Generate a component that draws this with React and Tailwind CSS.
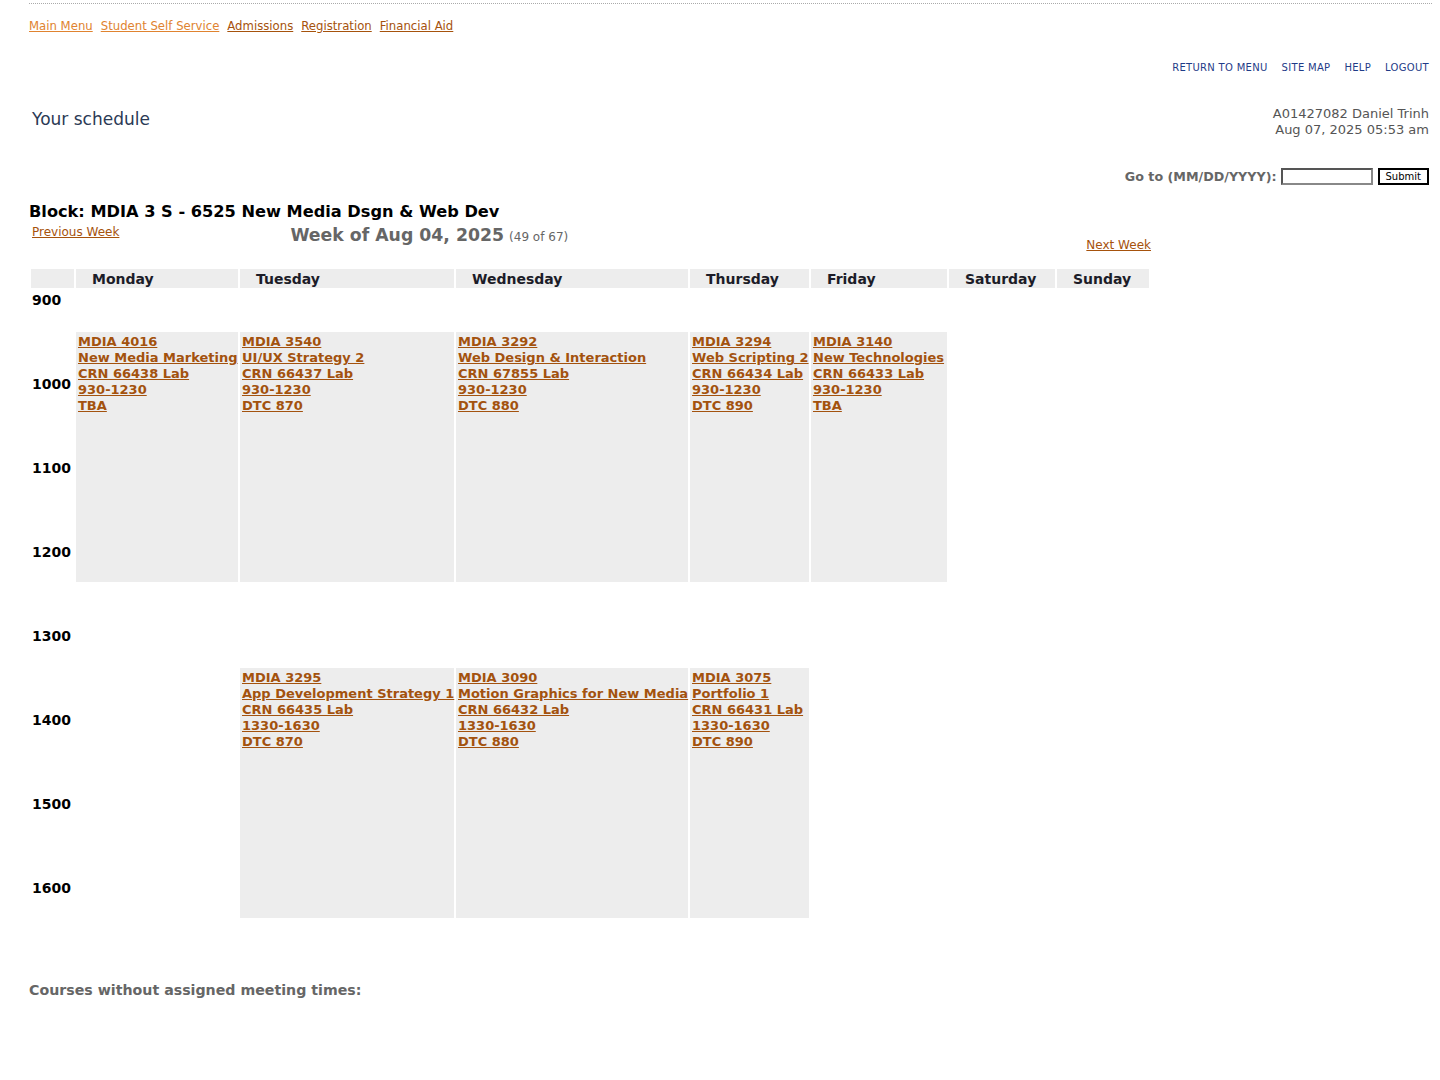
import React from "react";

const font = { fontFamily: '"DejaVu Sans", Verdana, sans-serif' };

function CourseCell({ cls, lines }) {
  return (
    <div className={`bg-[#ededed] pl-[2px] pt-[2px] text-[13px] leading-[16px] ${cls}`}>
      {lines.map((l, i) => (
        <div key={i} className="leading-[16px]">
          <a href="#" className="font-bold text-[#a3520e] underline whitespace-nowrap">
            {l}
          </a>
        </div>
      ))}
    </div>
  );
}

export default function App() {
  const days = ["Monday", "Tuesday", "Wednesday", "Thursday", "Friday", "Saturday", "Sunday"];
  return (
    <div style={font} className="bg-white min-h-[1080px] pt-[3px] pl-[29px] pr-[8px]">
      <div className="border-t border-dotted border-[#aaaaaa]" />
      <div className="flex gap-[8px] mt-[14px] text-[11.7px] leading-[16px]">
        <a href="#" className="text-[#e0832f] underline">Main Menu</a>
        <a href="#" className="text-[#e0832f] underline">Student Self Service</a>
        <a href="#" className="text-[#a6520c] underline">Admissions</a>
        <a href="#" className="text-[#a6520c] underline">Registration</a>
        <a href="#" className="text-[#a6520c] underline">Financial Aid</a>
      </div>
      <div className="flex justify-end gap-[14px] mt-[27px] pr-[3px] text-[10px] leading-[14px] text-[#1f3c88] tracking-[0.3px]">
        <a href="#">RETURN TO MENU</a>
        <a href="#">SITE MAP</a>
        <a href="#">HELP</a>
        <a href="#">LOGOUT</a>
      </div>
      <div className="flex justify-between items-start mt-[30px]">
        <div className="pl-[3px] pt-[4px] text-[17px] leading-[20px] text-[#2b3a55]">Your schedule</div>
        <div className="text-right pr-[3px] pt-[1px] text-[13px] leading-[16px] text-[#555555]">
          <div>A01427082 Daniel Trinh</div>
          <div>Aug 07, 2025 05:53 am</div>
        </div>
      </div>
      <div className="flex justify-end items-center mt-[29px] pr-[3px]">
        <span className="text-[12.7px] font-bold text-[#666666] mr-[4px]">Go to (MM/DD/YYYY):</span>
        <input className="w-[92px] h-[17px] border-2 border-t-[#555] border-l-[#555] border-b-[#888] border-r-[#888] mr-[5px]" />
        <button className="h-[17px] px-[6px] border-2 border-black text-[10px] leading-[12px] bg-white text-black">Submit</button>
      </div>
      <div className="mt-[16px] text-[16.2px] leading-[20px] font-bold text-black">
        Block: MDIA 3 S - 6525 New Media Dsgn &amp; Web Dev
      </div>
      <div className="flex items-start w-[1122px] mt-[2px]">
        <a href="#" className="ml-[3px] text-[12px] leading-[16px] text-[#a6520c] underline">Previous Week</a>
        <div className="ml-[171px] text-[#666666]">
          <span className="text-[17.3px] font-bold leading-[22px]">Week of Aug 04, 2025</span>{" "}
          <span className="text-[12px]">(49 of 67)</span>
        </div>
        <a href="#" className="ml-auto mt-[13px] text-[12px] leading-[16px] text-[#a6520c] underline">Next Week</a>
      </div>
      <div className="ml-[2px] mt-[16px] grid gap-[2px] grid-cols-[43px_162px_214px_232px_119px_136px_106px_92px] grid-rows-[19px_repeat(15,40px)]">
        <div className="bg-[#ededed]" />
        {days.map((d) => (
          <div key={d} className="bg-[#ededed] pl-[16px] pt-[1px] text-[14px] font-bold leading-[19px] text-[#1c1c28]">
            {d}
          </div>
        ))}
        <div className="col-start-1 row-start-2 row-span-2 pl-[1px] pt-[2px] text-[14px] font-bold leading-[17px] text-black">900</div>
        <div className="col-start-1 row-start-4 row-span-2 pl-[1px] pt-[2px] text-[14px] font-bold leading-[17px] text-black">1000</div>
        <div className="col-start-1 row-start-6 row-span-2 pl-[1px] pt-[2px] text-[14px] font-bold leading-[17px] text-black">1100</div>
        <div className="col-start-1 row-start-8 row-span-2 pl-[1px] pt-[2px] text-[14px] font-bold leading-[17px] text-black">1200</div>
        <div className="col-start-1 row-start-10 row-span-2 pl-[1px] pt-[2px] text-[14px] font-bold leading-[17px] text-black">1300</div>
        <div className="col-start-1 row-start-12 row-span-2 pl-[1px] pt-[2px] text-[14px] font-bold leading-[17px] text-black">1400</div>
        <div className="col-start-1 row-start-14 row-span-2 pl-[1px] pt-[2px] text-[14px] font-bold leading-[17px] text-black">1500</div>
        <div className="col-start-1 row-start-16 pl-[1px] pt-[2px] text-[14px] font-bold leading-[17px] text-black">1600</div>

        <CourseCell cls="col-start-2 row-start-3 row-span-6" lines={["MDIA 4016", "New Media Marketing", "CRN 66438 Lab", "930-1230", "TBA"]} />
        <CourseCell cls="col-start-3 row-start-3 row-span-6" lines={["MDIA 3540", "UI/UX Strategy 2", "CRN 66437 Lab", "930-1230", "DTC 870"]} />
        <CourseCell cls="col-start-4 row-start-3 row-span-6" lines={["MDIA 3292", "Web Design & Interaction", "CRN 67855 Lab", "930-1230", "DTC 880"]} />
        <CourseCell cls="col-start-5 row-start-3 row-span-6" lines={["MDIA 3294", "Web Scripting 2", "CRN 66434 Lab", "930-1230", "DTC 890"]} />
        <CourseCell cls="col-start-6 row-start-3 row-span-6" lines={["MDIA 3140", "New Technologies", "CRN 66433 Lab", "930-1230", "TBA"]} />

        <CourseCell cls="col-start-3 row-start-11 row-span-6" lines={["MDIA 3295", "App Development Strategy 1", "CRN 66435 Lab", "1330-1630", "DTC 870"]} />
        <CourseCell cls="col-start-4 row-start-11 row-span-6" lines={["MDIA 3090", "Motion Graphics for New Media", "CRN 66432 Lab", "1330-1630", "DTC 880"]} />
        <CourseCell cls="col-start-5 row-start-11 row-span-6" lines={["MDIA 3075", "Portfolio 1", "CRN 66431 Lab", "1330-1630", "DTC 890"]} />
      </div>
      <div className="mt-[63px] text-[14.2px] font-bold leading-[18px] text-[#666666]">
        Courses without assigned meeting times:
      </div>
    </div>
  );
}
